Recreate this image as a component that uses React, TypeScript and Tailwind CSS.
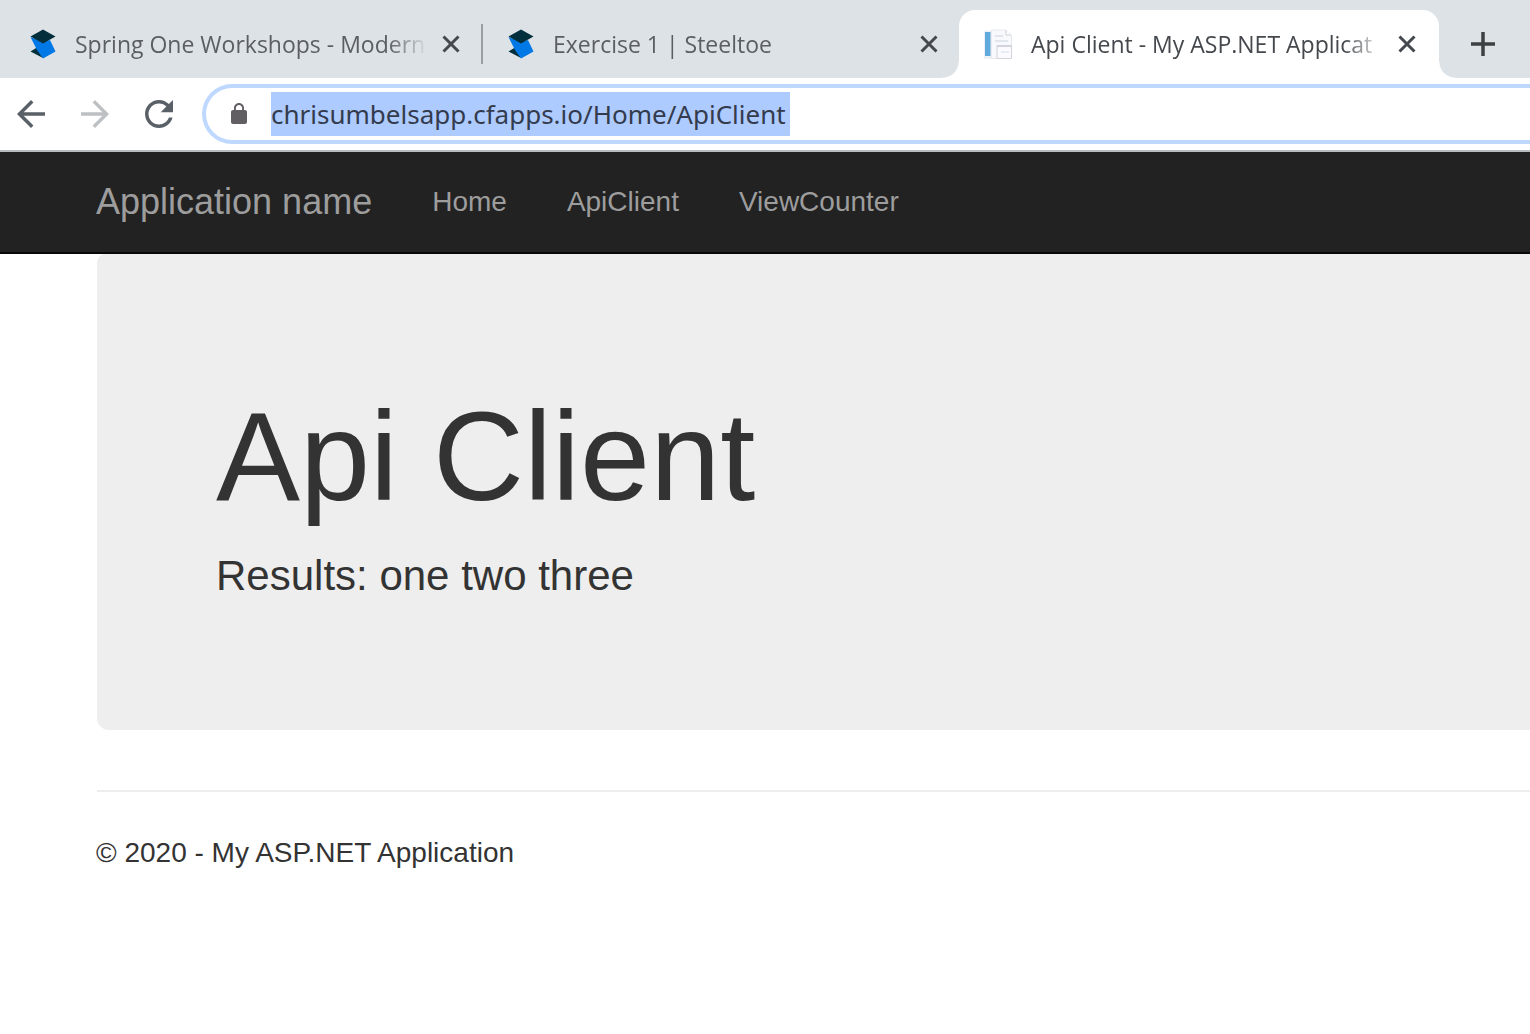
import type { ReactNode } from "react";

function SteeltoeIcon() {
  return (
    <svg viewBox="0 0 30 30" className="h-[30px] w-[30px] shrink-0" aria-hidden="true">
      <path d="M2.5 22.5 L9 18.5 L15 29 Z" fill="#032f3c" />
      <path d="M2.5 8 L15 13 L22 11 L27.5 22.500 L15 29.5 L9 21 Z" fill="#0078e6" />
      <path d="M15 0.5 L27.5 7.5 L15 14.5 L2.5 7.5 Z" fill="#032f3c" />
    </svg>
  );
}

function DocumentIcon() {
  return (
    <svg viewBox="0 0 30 30" className="h-[30px] w-[30px] shrink-0" aria-hidden="true">
      <path d="M0 1.5 H8 V30 H0 Z" fill="#eef1f5" />
      <path d="M1 3 H6.5 V27 H1 Z" fill="#5fa9dc" />
      <path d="M7.5 1 H22 L27.5 6 V29.5 H7.5 Z" fill="#f8f9fc" stroke="#e8eaef" />
      <path d="M22 1 V6 H27" fill="#ffffff" stroke="#cfd1d5" />
      <path d="M11 7 H19 M11 12 H24" stroke="#e2e5ee" strokeWidth="2" />
      <path d="M13 16.5 H27.5 V29.5 H13 Z" fill="#fbfbfd" stroke="#d2d3dc" />
      <path d="M13 17 H28" stroke="#d2d3dc" strokeWidth="2" />
      <path d="M17 23 H25" stroke="#e9ebf5" strokeWidth="2" />
    </svg>
  );
}

function Tab({ title, icon, active = false }: { title: string; icon: ReactNode; active?: boolean }) {
  return (
    <div
      className={
        active
          ? "relative flex h-[68px] w-[480px] shrink-0 items-center rounded-t-2xl bg-white pl-[25px] pr-[21px] text-[#45494d] before:absolute before:-left-4 before:bottom-0 before:size-4 before:bg-[radial-gradient(circle_at_0_0,transparent_15px,white_16px)] after:absolute after:-right-4 after:bottom-0 after:size-4 after:bg-[radial-gradient(circle_at_100%_0,transparent_15px,white_16px)]"
          : "flex h-[68px] w-[478px] shrink-0 items-center pl-6 pr-5 text-[#5b5f64]"
      }
    >
      {icon}
      <button
        type="button"
        className="ml-[17px] mr-3 min-w-0 flex-1 overflow-hidden whitespace-nowrap text-left text-[23px] leading-8 [mask-image:linear-gradient(to_right,black_calc(100%-40px),transparent)]"
      >
        {title}
      </button>
      <button type="button" aria-label={"Close " + title} className="flex w-[22px] justify-center text-[#45494d]">
        <svg viewBox="0 0 18 18" className="size-[18px]" fill="none" stroke="currentColor" strokeWidth="3">
          <path d="M1.5 1.5 L16.5 16.5 M16.5 1.5 L1.5 16.5" />
        </svg>
      </button>
    </div>
  );
}

function ToolButton({ label, path, className }: { label: string; path: string; className: string }) {
  return (
    <button type="button" aria-label={label} className={className}>
      <svg viewBox="0 0 24 24" className="size-[42px]" fill="currentColor">
        <path d={path} />
      </svg>
    </button>
  );
}

export default function App() {
  return (
    <div className="min-h-screen overflow-x-hidden bg-white font-['Liberation_Sans',Arial,sans-serif] text-[#333333]">
      <header className="font-['Open_Sans','Segoe_UI',sans-serif]">
        <div className="flex items-end bg-[#dde2e6] pl-1 pt-2.5">
          <Tab title="Spring One Workshops - Modern" icon={<SteeltoeIcon />} />
          <div className="-ml-px -mr-px mb-3.5 h-10 w-0.5 shrink-0 bg-[#9a9ea3]" />
          <Tab title="Exercise 1 | Steeltoe" icon={<SteeltoeIcon />} />
          <div className="-ml-px flex items-center">
            <Tab title="Api Client - My ASP.NET Applicat" icon={<DocumentIcon />} active />
            <button type="button" aria-label="New tab" className="ml-6 flex w-10 justify-center text-[#3c4043]">
              <svg viewBox="0 0 24 24" className="size-6" fill="none" stroke="currentColor" strokeWidth="3.5">
                <path d="M12 0 V24 M0 12 H24" />
              </svg>
            </button>
          </div>
        </div>
        <div className="flex items-center gap-[22px] border-b-2 border-[#b9bcbf] py-1.5 pl-2.5">
          <ToolButton
            label="Back"
            className="shrink-0 text-[#5a6067]"
            path="M20 11H7.83l5.59-5.59L12 4l-8 8 8 8 1.41-1.41L7.83 13H20v-2z"
          />
          <ToolButton
            label="Forward"
            className="shrink-0 text-[#bdc1c4]"
            path="M12 4l-1.41 1.41L16.17 11H4v2h12.17l-5.58 5.59L12 20l8-8z"
          />
          <ToolButton
            label="Reload"
            className="shrink-0 text-[#5a6067]"
            path="M17.65 6.35C16.2 4.9 14.21 4 12 4c-4.42 0-7.99 3.58-7.99 8s3.57 8 7.99 8c3.73 0 6.84-2.55 7.73-6h-2.08c-.82 2.33-3.04 4-5.65 4-3.31 0-6-2.69-6-6s2.69-6 6-6c1.66 0 3.14.69 4.22 1.78L13 11h7V4l-2.35 2.35z"
          />
          <div className="flex h-[60px] min-w-0 flex-1 items-center gap-5 rounded-l-full border-4 border-r-0 border-[#bfd8ff] pl-[21px]">
            <svg viewBox="0 0 24 24" className="size-6 shrink-0" fill="#625f62" aria-hidden="true">
              <path d="M18 8h-1V6c0-2.76-2.24-5-5-5S7 3.240 7 6v2H6c-1.100 0-2 .9-2 2v10c0 1.100.9 2 2 2h12c1.100 0 2-.9 2-2V10c0-1.100-.9-2-2-2zM8.900 6c0-1.710 1.390-3.100 3.100-3.100s3.100 1.390 3.100 3.100v2H8.900V6z" />
            </svg>
            <input
              type="text"
              aria-label="Address"
              defaultValue="chrisumbelsapp.cfapps.io/Home/ApiClient"
              className="field-sizing-content h-11 bg-[#aecbff] pr-1 font-['Noto_Sans','Segoe_UI',sans-serif] text-[26px] leading-[44px] text-[#333b4d] outline-none"
            />
          </div>
        </div>
      </header>

      <nav className="relative z-10 flex h-[102px] items-center gap-[60px] border-b-2 border-[#080808] bg-[#222222] pl-24 text-[28px] leading-10 text-[#9d9d9d]">
        <a href="#top" className="text-[36px]">Application name</a>
        <a href="#home">Home</a>
        <a href="#api-client">ApiClient</a>
        <a href="#view-counter">ViewCounter</a>
      </nav>

      <main className="-mt-0.5 pl-[97px]">
        <section className="rounded-l-xl bg-[#eeeeee] px-[119px] pb-[124px] pt-[136px]">
          <h1 className="mb-5 text-[126px] leading-[138px]">Api Client</h1>
          <p className="text-[42px] leading-[60px]">Results: one two three</p>
        </section>
        <hr className="mb-10 mt-[60px] border-t-2 border-[#eeeeee]" />
        <footer className="-ml-px text-[28px] leading-[42px]">
          <p>© 2020 - My ASP.NET Application</p>
        </footer>
      </main>
    </div>
  );
}
